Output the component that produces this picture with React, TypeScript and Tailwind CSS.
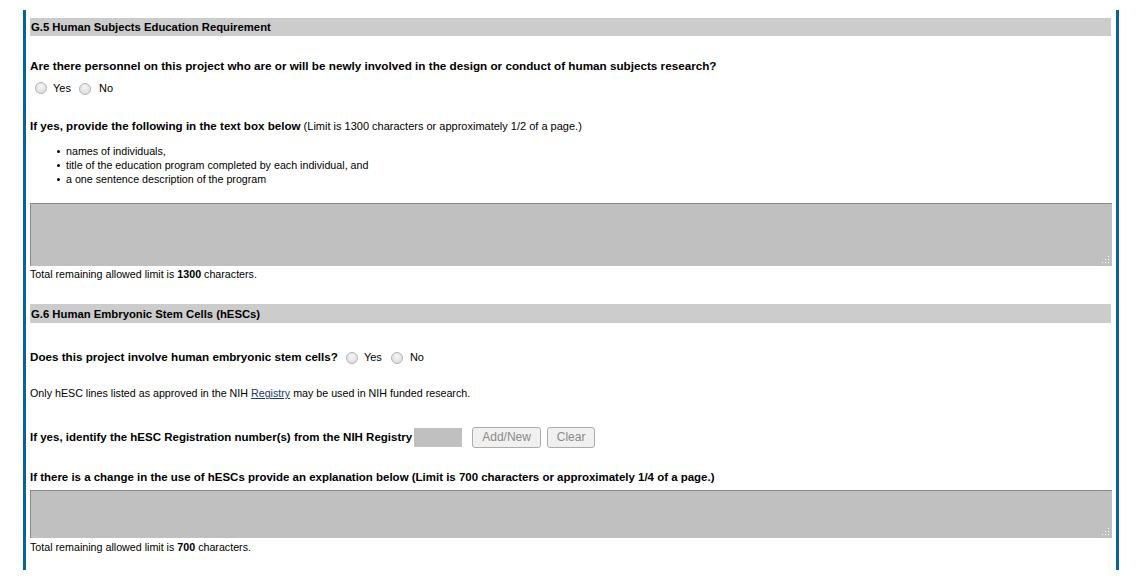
import React from "react";

const Radio = () => (
  <span className="inline-block w-[12px] h-[12px] rounded-full border border-[#b4b4b4] bg-[radial-gradient(circle_at_50%_35%,#f6f6f6,#d6d6d6)] align-middle" />
);

const Resize = () => (
  <svg width="8" height="8" viewBox="0 0 8 8" className="absolute right-[2px] bottom-[2px]">
    <rect x="6" y="0" width="1" height="1" fill="#fff" />
    <rect x="3" y="3" width="1" height="1" fill="#fff" />
    <rect x="6" y="3" width="1" height="1" fill="#fff" />
    <rect x="0" y="6" width="1" height="1" fill="#fff" />
    <rect x="3" y="6" width="1" height="1" fill="#fff" />
    <rect x="6" y="6" width="1" height="1" fill="#fff" />
  </svg>
);

const Bullet = ({ children }: { children: React.ReactNode }) => (
  <div className="flex items-center h-[14px]">
    <span className="inline-block w-[3px] h-[3px] rounded-full bg-black ml-[27px] mr-[6px]" />
    <span>{children}</span>
  </div>
);

export default function App() {
  return (
    <div className="w-[1141px] h-[578px] bg-white overflow-hidden font-['Liberation_Sans',Arial,sans-serif] text-black text-[11px] leading-[14px]">
      <div className="mt-[10px] ml-[23px] w-[1096px] h-[560px] border-l-[3px] border-r-[3px] border-[#08639b] pl-[4px] pr-[4px]">
        <div className="pt-[8px]">
          <div className="h-[18px] bg-[#cccccc] flex items-center pl-[1px] font-bold text-[11.3px] w-[1081px]">
            G.5 Human Subjects Education Requirement
          </div>
          <div className="mt-[23px] font-bold text-[11.7px]">
            Are there personnel on this project who are or will be newly involved in the design or conduct of human subjects research?
          </div>
          <div className="mt-[8px] flex items-center h-[14px] pl-[5px]">
            <Radio />
            <span className="ml-[6px]">Yes</span>
            <span className="ml-[8px]"><Radio /></span>
            <span className="ml-[8px]">No</span>
          </div>
          <div className="mt-[24px]">
            <span className="font-bold text-[11.6px]">If yes, provide the following in the text box below</span> (Limit is 1300 characters or approximately 1/2 of a page.)
          </div>
          <div className="mt-[11px] text-[10.7px]">
            <Bullet>names of individuals,</Bullet>
            <Bullet>title of the education program completed by each individual, and</Bullet>
            <Bullet>a one sentence description of the program</Bullet>
          </div>
          <div className="relative mt-[17px] h-[63px] w-[1082px] bg-[#c0c0c0] border-t border-l border-[#8a8a8a]">
            <Resize />
          </div>
          <div className="mt-[1px] text-[10.7px]">
            Total remaining allowed limit is <span className="font-bold">1300</span> characters.
          </div>
          <div className="mt-[23px] h-[19px] bg-[#cccccc] flex items-center pl-[1px] font-bold text-[11.3px] w-[1081px]">
            G.6 Human Embryonic Stem Cells (hESCs)
          </div>
          <div className="mt-[26px] flex items-center h-[16px]">
            <span className="font-bold text-[11.65px]">Does this project involve human embryonic stem cells?</span>
            <span className="ml-[8px]"><Radio /></span>
            <span className="ml-[6px]">Yes</span>
            <span className="ml-[9px]"><Radio /></span>
            <span className="ml-[7px]">No</span>
          </div>
          <div className="mt-[21px] text-[10.7px]">
            Only hESC lines listed as approved in the NIH <a className="underline text-[#1b3a6a]">Registry</a> may be used in NIH funded research.
          </div>
          <div className="mt-[26px] flex items-center h-[22px]">
            <span className="font-bold text-[11.5px]">If yes, identify the hESC Registration number(s) from the NIH Registry</span>
            <span className="ml-[2px] inline-block w-[48px] h-[19px] bg-[#c0c0c0]" />
            <button className="ml-[10px] h-[21px] w-[69px] border border-[#acacac] rounded-[3px] bg-[#f0f0f0] text-[#8a8a8a] text-[12px]">Add/New</button>
            <button className="ml-[6px] h-[21px] w-[48px] border border-[#acacac] rounded-[3px] bg-[#f0f0f0] text-[#8a8a8a] text-[12px]">Clear</button>
          </div>
          <div className="mt-[22px] font-bold text-[11.48px]">
            If there is a change in the use of hESCs provide an explanation below (Limit is 700 characters or approximately 1/4 of a page.)
          </div>
          <div className="relative mt-[6px] h-[48px] w-[1082px] bg-[#c0c0c0] border-t border-l border-[#8a8a8a]">
            <Resize />
          </div>
          <div className="mt-[2px] text-[10.7px]">
            Total remaining allowed limit is <span className="font-bold">700</span> characters.
          </div>
        </div>
      </div>
    </div>
  );
}
